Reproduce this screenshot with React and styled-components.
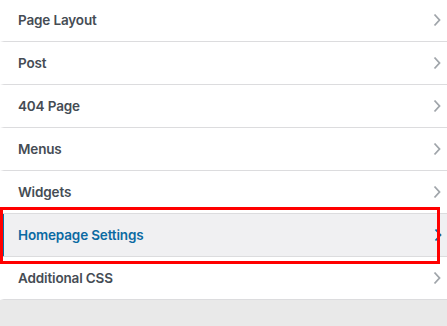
import styled, { createGlobalStyle } from "styled-components";

const GlobalStyle = createGlobalStyle`
  html, body {
    margin: 0;
    padding: 0;
    background: #e9e9e9;
  }

  body {
    font-family: Inter, "Liberation Sans", sans-serif;
    overflow: hidden;
  }
`;

const sections = [
  { id: "layout", title: "Page Layout" },
  { id: "post", title: "Post" },
  { id: "404", title: "404 Page" },
  { id: "menus", title: "Menus" },
  { id: "widgets", title: "Widgets" },
  { id: "homepage", title: "Homepage Settings", active: true },
  { id: "css", title: "Additional CSS" },
];

const Chevron = ({ active }) => (
  <Arrow $active={active} width="8" height="14" viewBox="0 0 8 14">
    <path d="M1.5 1.5 L6.5 7 L1.5 12.5" fill="none" stroke="currentColor" strokeWidth="1.8" />
  </Arrow>
);

const App = () => {
  const rows = sections.map(section => (
    <Row key={section.id} $active={section.active}>
      <Title $active={section.active}>{section.title}</Title>
      <Chevron active={section.active} />
      {section.active && <Highlight />}
    </Row>
  ));

  return (
    <>
      <GlobalStyle />
      <Panel>
        <Sections>{rows}</Sections>
      </Panel>
    </>
  );
};

const Panel = styled.div`
  width: 447px;
  height: 326px;
  background: #e9e9e9;
  overflow: hidden;
`;

const Sections = styled.ul`
  list-style: none;
  margin: -1px 0 0;
  padding: 0;
  background: #fff;
`;

const Row = styled.li`
  position: relative;
  display: flex;
  align-items: center;
  justify-content: space-between;
  height: 42px;
  padding: 0 6px 0 14px;
  border-left: 4px solid ${({ $active }) => ($active ? "#0073aa" : "#fff")};
  border-bottom: 1px solid #dcdcde;
  background: ${({ $active }) => ($active ? "#f0f0f2" : "#fff")};
`;

const Title = styled.span`
  font-size: 13.5px;
  font-weight: 600;
  letter-spacing: -0.15px;
  line-height: 21px;
  color: ${({ $active }) => ($active ? "#0b6aa2" : "#454c54")};
`;

const Arrow = styled.svg`
  display: block;
  color: ${({ $active }) => ($active ? "#0b6aa2" : "#a0a5aa")};
  margin-right: ${({ $active }) => ($active ? "-1px" : "0")};
`;

const Highlight = styled.div`
  position: absolute;
  z-index: 1;
  top: -7px;
  bottom: -8px;
  left: -4px;
  width: 440px;
  box-sizing: border-box;
  border: 3px solid #ff0000;
  pointer-events: none;
`;

export default App;
